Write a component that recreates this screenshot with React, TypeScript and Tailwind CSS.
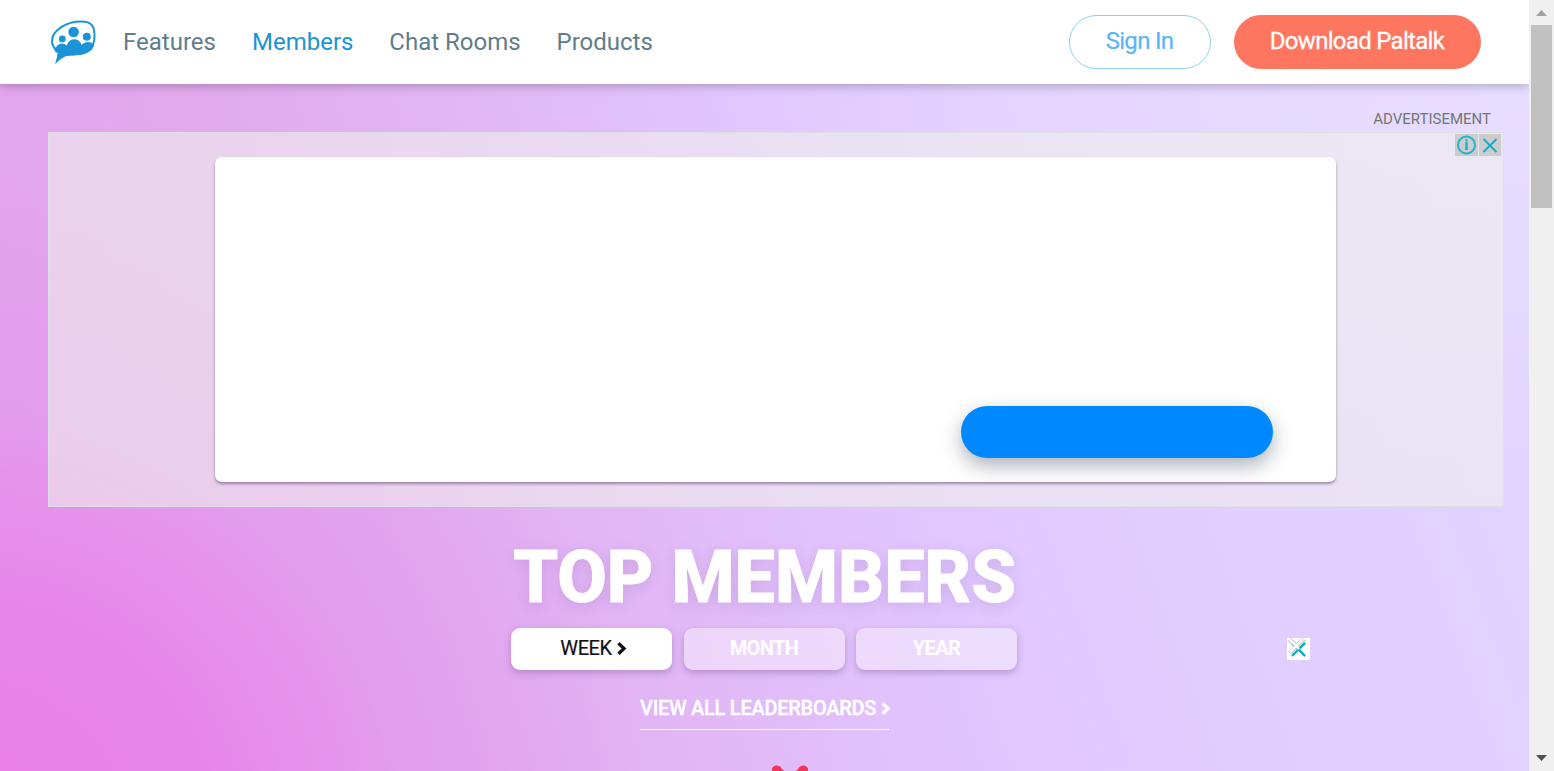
import React from "react";

function Logo() {
  return (
    <svg className="h-[46px] w-[46px] shrink-0" viewBox="0 0 46 46">
      <clipPath id="bubble">
        <path d="M1 22C1 9 15 1 31 1c12 0 15 6 15 15 0 13-7 18-18 19-9 .8-12 0-15 3L5 44l3-11C4 31 1 27 1 22Z" />
      </clipPath>
      <path d="M2 21C2 10 17 1.500 31 1.500c11 0 13.500 5 13.500 14.500 0 12-6 17-17.500 18-9 .8-17 .8-21-4C3.500 27.500 2 24.500 2 21Z" fill="#fff" stroke="#1a94d6" strokeWidth="2" />
      <g fill="#1a94d6">
        <circle cx="12.300" cy="18.900" r="3.400" />
        <circle cx="23.600" cy="12" r="5.300" />
        <circle cx="36.800" cy="16.700" r="4" />
        <g clipPath="url(#bubble)">
          <ellipse cx="12" cy="31" rx="7" ry="7.500" />
          <ellipse cx="24.300" cy="31" rx="8.800" ry="11.800" />
          <ellipse cx="38" cy="30" rx="8" ry="8" />
          <path d="M4 27.500h39v8H5z" />
        </g>
        <path d="M9 30 5 44 15.500 35l7-1Z" />
      </g>
    </svg>
  );
}

function Chevron() {
  return (
    <svg className="ml-[5px] h-[13px] w-[10px]" viewBox="0 0 10 13" fill="none" stroke="currentColor" strokeWidth="3.300">
      <path d="M1.500 1.200 7 6.500 1.500 11.800" />
    </svg>
  );
}

function Header() {
  return (
    <header className="relative z-10 flex h-[84px] shrink-0 items-start bg-white pl-[50px] pr-12 shadow-[0_2px_10px_rgba(0,0,0,0.25)]">
      <div className="mt-5">
        <Logo />
      </div>
      <nav className="ml-[27px] mt-[26px] flex text-[24px] leading-8 whitespace-nowrap text-[#607d8b]">
        <a className="w-[129px]">Features</a>
        <a className="w-[137.300px] text-[#1a94d6]">Members</a>
        <a className="w-[167.200px]">Chat Rooms</a>
        <a>Products</a>
      </nav>
      <div className="ml-auto mt-[15px] flex gap-[23px] text-[24px] tracking-[-0.7px] whitespace-nowrap">
        <button className="h-[54px] w-[142px] rounded-full border border-[#8dd2f0] pr-[7px] pb-[2px] pl-[6px] text-[#5ab4fa] [-webkit-text-stroke:0.2px_#5ab4fa]">Sign In</button>
        <button className="h-[54px] w-[247px] rounded-full bg-[#ff7660] pr-[7px] pb-[2px] pl-[6px] text-white [-webkit-text-stroke:0.3px_#ffffff]">Download Paltalk</button>
      </div>
    </header>
  );
}

function Advert() {
  return (
    <section className="ml-12 w-[1456px]">
      <p className="mr-[13px] text-right text-[15px] leading-5 text-[#757575]">ADVERTISEMENT</p>
      <div className="relative mt-[3px] flex h-[375px] border border-[#dedfe3] bg-[#f0eeed]/60 pt-6 pl-[166px]">
        <div className="flex h-[325px] w-[1121px] items-end justify-end rounded-[7px] bg-white pr-[63px] pb-6 shadow-[0_2px_3px_rgba(60,35,75,0.45)]">
          <div className="h-[52px] w-[312px] rounded-full bg-[#0088ff] shadow-[0_8px_20px_rgba(20,35,60,0.35)]" />
        </div>
        <div className="absolute top-[1px] right-[2px] flex gap-[1px]">
          <svg className="h-[22px] w-[23px] bg-[#cccccc]" viewBox="0 0 23 22" fill="none" stroke="#25b4cc">
            <circle cx="11.500" cy="11" r="8.500" strokeWidth="1.900" />
            <path d="M10 8.500h2M9.800 15.500h3.400" strokeWidth="1.200" />
            <path d="M11.500 8.500v7.500" strokeWidth="2.600" />
            <path d="M10.200 6.300h2.600" strokeWidth="2" />
          </svg>
          <svg className="h-[22px] w-[22px] bg-[#cccccc]" viewBox="0 0 22 22" stroke="#12aec8" strokeWidth="1.900">
            <path d="m4.500 5 13 13m0-13-13 13" />
          </svg>
        </div>
      </div>
    </section>
  );
}

function Scrollbar() {
  return (
    <div className="relative z-20 flex w-[25px] shrink-0 flex-col items-center bg-[#f0f0f0]">
      <svg className="h-[25px] w-[25px]" viewBox="0 0 25 25"><path d="M7 16h11l-5.500-6Z" fill="#a0a0a0" /></svg>
      <div className="h-[183px] w-[21px] bg-[#c1c1c1]" />
      <svg className="mt-auto h-[25px] w-[25px]" viewBox="0 0 25 25"><path d="M7 9h11l-5.500 6Z" fill="#505050" /></svg>
    </div>
  );
}

export default function App() {
  const tab = "flex h-[42px] w-[161px] items-center justify-center rounded-[9px] pb-[2px] shadow-[0_3px_7px_rgba(90,50,120,0.3)]";
  return (
    <div className="flex h-[771px] w-[1554px] overflow-hidden font-['Roboto',sans-serif]">
      <div className="flex min-w-0 flex-1 flex-col bg-[radial-gradient(ellipse_860px_480px_at_100%_5%,rgba(234,224,255,0.85)_0%,rgba(232,218,255,0)_100%),radial-gradient(ellipse_680px_640px_at_-2%_108%,#eb7de7_0%,rgba(232,130,232,0.9)_35%,rgba(228,148,239,0.55)_65%,rgba(226,175,248,0)_100%),linear-gradient(70deg,#e4a0ec_0%,#e2aaef_25%,#e1b7f6_39%,#e2c3fd_52%,#e1ceff_70%,#e0d6ff_100%)]">
        <Header />
        <main className="relative flex flex-1 flex-col pt-[25px]">
          <Advert />
          <section className="mt-[33px] flex flex-col items-center">
            <h1 className="h-[76px] text-[72px] leading-[76px] font-extrabold whitespace-nowrap text-white [-webkit-text-stroke:1px_#ffffff] [text-shadow:0_4px_14px_rgba(100,60,130,0.16)]">TOP MEMBERS</h1>
            <div className="mt-3 mr-[1px] flex gap-[11.500px] text-[20px] leading-6 font-bold tracking-[-0.6px] text-white">
              <button className={`${tab} bg-white pl-[4px] font-normal text-[#111111] [-webkit-text-stroke:0.200px_#111111]`}><span className="tracking-[-0.400px]">WEEK</span><Chevron /></button>
              <button className={`${tab} bg-white/40`}>MONTH</button>
              <button className={`${tab} bg-white/40`}>YEAR</button>
            </div>
            <a className="mt-6 flex h-9 w-[249px] items-start border-b border-white text-[20px] leading-7 font-medium tracking-[-0.270px] whitespace-nowrap text-white [-webkit-text-stroke:0.3px_#ffffff]">
              VIEW ALL LEADERBOARDS<span className="mt-[8px]"><Chevron /></span>
            </a>
          </section>
          <svg className="absolute top-[681px] left-[770px] h-[6px] w-10" viewBox="0 0 40 6" fill="#f0365c">
            <path d="M2 6V4c1-4 7-5 10 0l2 2Zm24 0 2-2c3-5 9-4 10 0v2Z" />
          </svg>
          <svg className="absolute top-[554px] left-[1287px] h-[22px] w-[23px] bg-white" viewBox="0 0 23 22">
            <path d="m5 5 13 13M18 5 5 18" stroke="#12a8c0" strokeWidth="2.200" />
            <path d="m2 1 10 10M17 1 3 15" stroke="#aaaaaa" strokeWidth="5" opacity=".5" />
            <path d="m2 1 10 10M16 1 3 14" stroke="#fff" strokeWidth="2.200" />
            <path d="m12 12 6 6M18 5 13 10" stroke="#12a8c0" strokeWidth="2" />
          </svg>
        </main>
      </div>
      <Scrollbar />
    </div>
  );
}
